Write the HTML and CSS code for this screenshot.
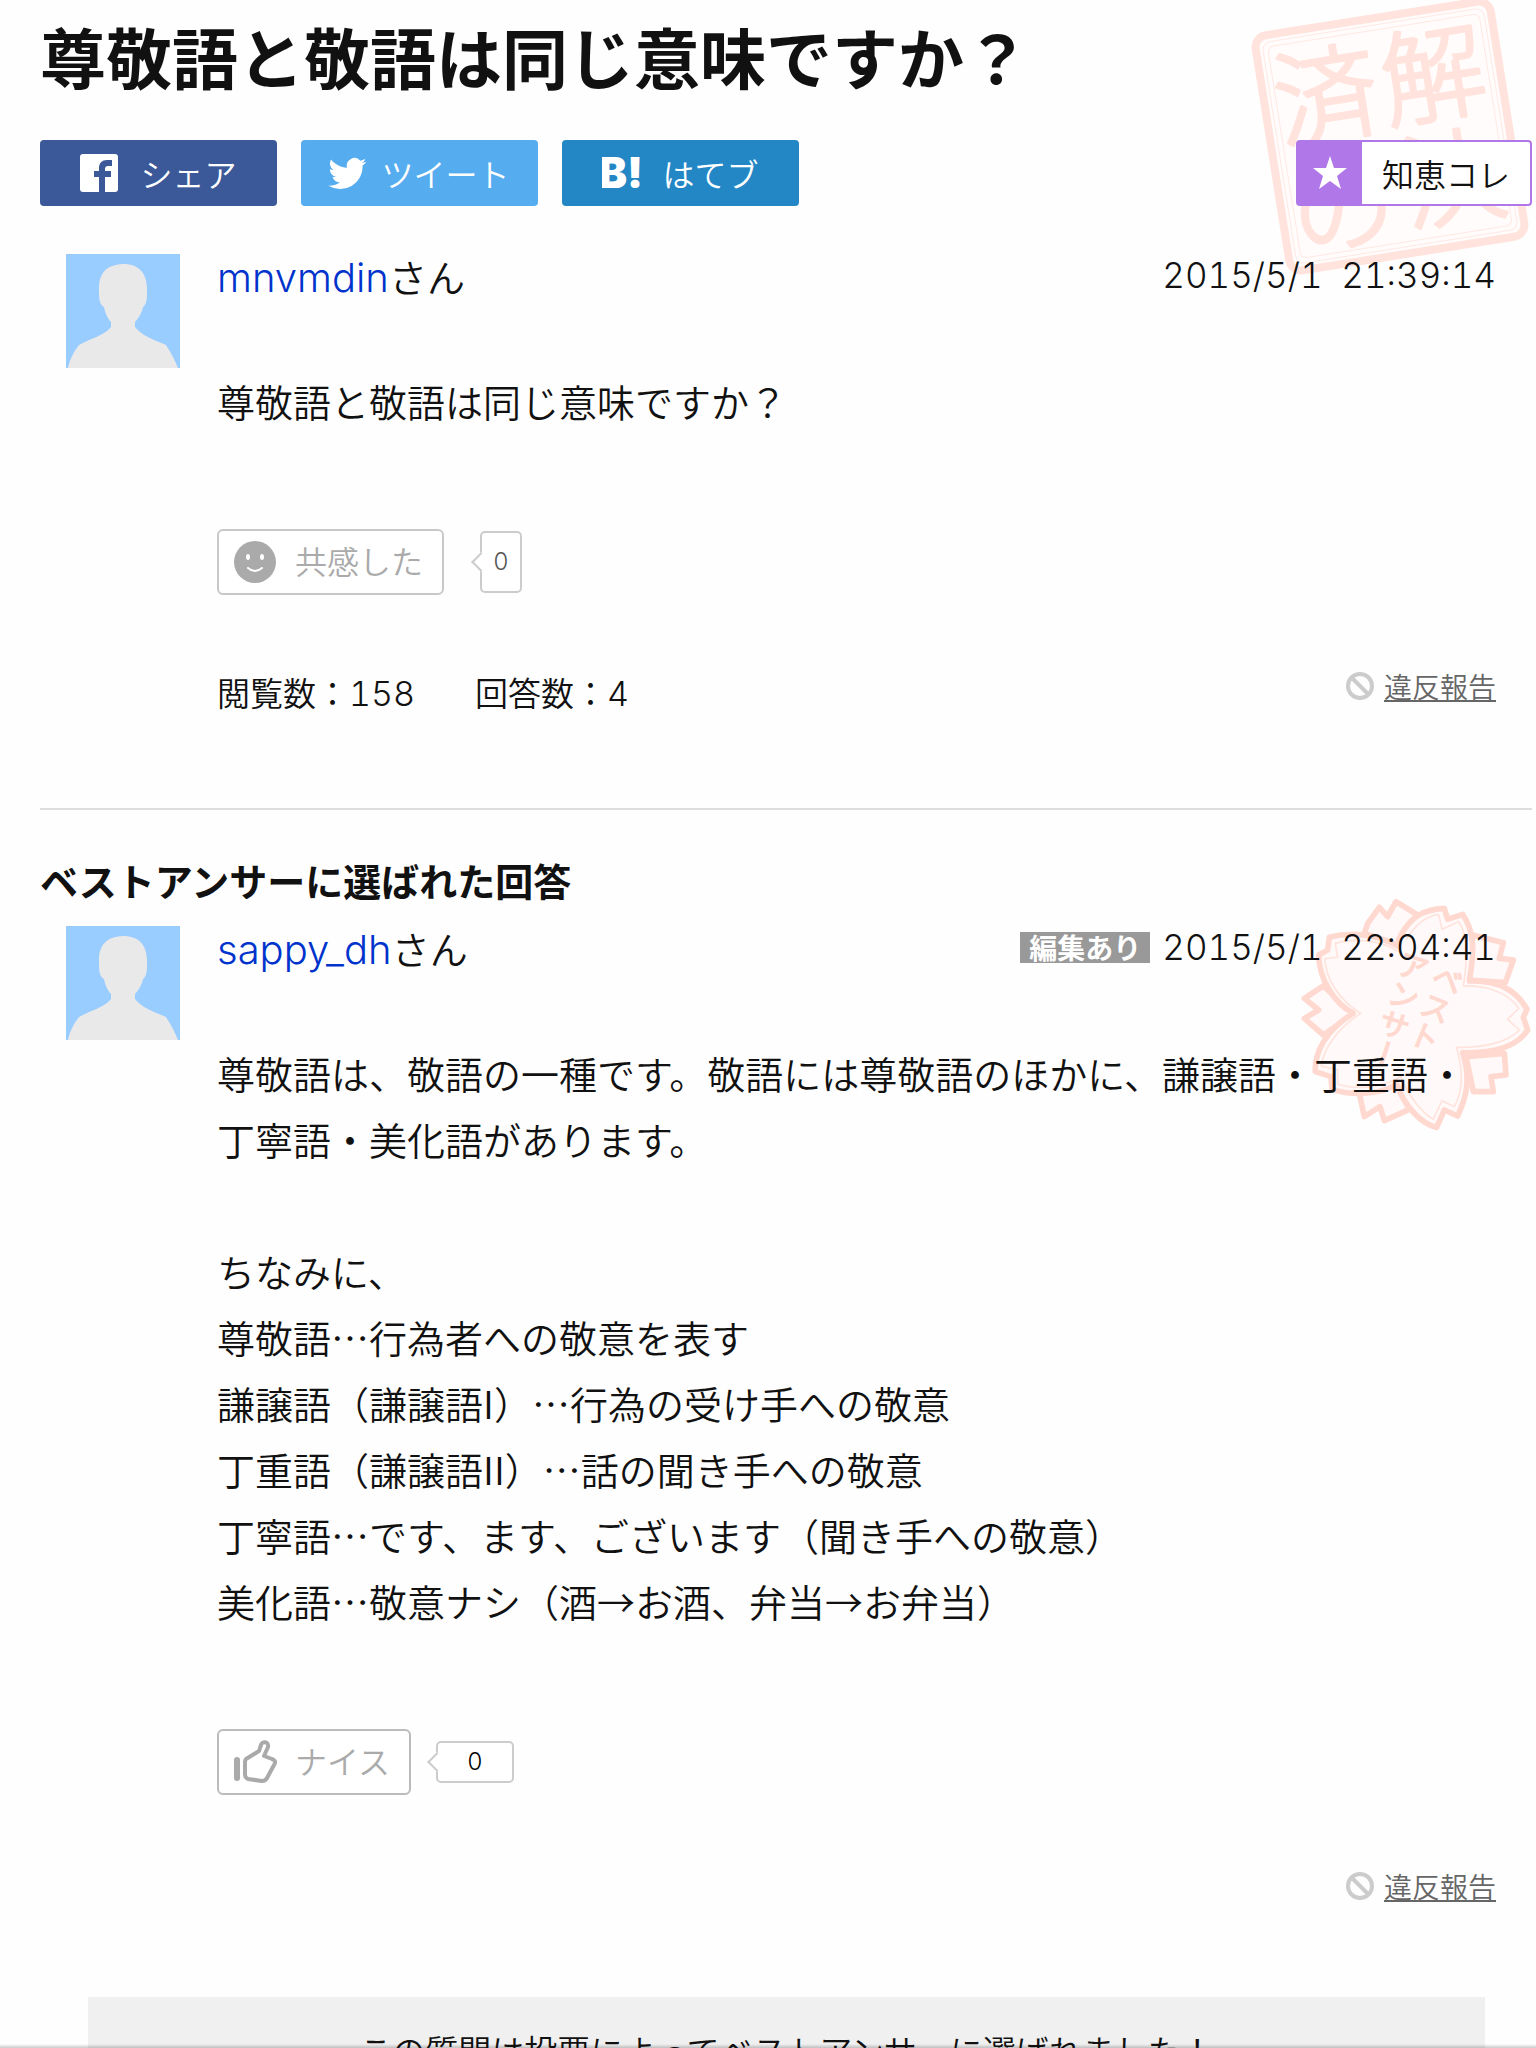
FILE: index.html
```html
<!DOCTYPE html>
<html lang="ja">

<head>
    <meta charset="UTF-8">
    <meta name="viewport" content="width=device-width, initial-scale=1.0">
    <title>尊敬語と敬語は同じ意味ですか？</title>
    <link rel="stylesheet" href="styles.css">
</head>

<body>
    <main class="page">
        <!-- Solved stamp -->
        <svg class="stamp-solved" viewBox="0 0 290 290" aria-hidden="true">
            <g transform="translate(145 145) rotate(-9)">
                <rect class="stamp-frame" x="-119" y="-119" width="238" height="238" rx="12" />
                <rect class="stamp-line" x="-112" y="-112" width="224" height="224" rx="8" />
                <rect class="stamp-line" x="-107" y="-107" width="214" height="214" rx="6" />
                <g class="stamp-text">
                    <text x="52" y="-15">解</text>
                    <text x="56" y="90">決</text>
                    <text x="-57" y="-12">済</text>
                    <text x="-58" y="101">の</text>
                </g>
            </g>
        </svg>

        <h1 class="title">尊敬語と敬語は同じ意味ですか？</h1>

        <div class="toolbar">
            <button class="share facebook" type="button">
                <svg class="share-icon" viewBox="0 0 38 38" aria-hidden="true">
                    <rect width="38" height="38" rx="3" fill="#fff" />
                    <path d="M19 38V23h-5v-6h5v-3c0-5 3-8 8-8h5v6h-4c-2 0-3 1-3 3v2h6v6h-6v15z" fill="#3b5998" />
                </svg>
                <span>シェア</span>
            </button>
            <button class="share twitter" type="button">
                <svg class="share-icon" viewBox="0 0 24 24" aria-hidden="true">
                    <path d="M23.600 4.900c-.9.400-1.800.6-2.800.8 1-.6 1.800-1.600 2.100-2.700-.9.600-2 1-3.100 1.200a4.900 4.900 0 0 0-8.400 4.500C7.300 8.500 3.700 6.500 1.300 3.500a4.900 4.900 0 0 0 1.500 6.600c-.8 0-1.600-.2-2.200-.6v.1c0 2.400 1.700 4.400 3.900 4.800-.7.200-1.500.2-2.200.1.600 2 2.400 3.400 4.600 3.400A9.900 9.900 0 0 1 -.4 19.900 14 14 0 0 0 21.200 7.300c1-.6 1.800-1.500 2.400-2.400z" fill="#fff" />
                </svg>
                <span>ツイート</span>
            </button>
            <button class="share hatena" type="button">
                <svg class="share-icon" viewBox="0 0 38 38" aria-hidden="true">
                    <text class="hatena-mark" x="19" y="34">B!</text>
                </svg>
                <span>はてブ</span>
            </button>
            <button class="collect" type="button">
                <span class="collect-icon">
                    <svg width="36" height="36" viewBox="0 0 36 36" aria-hidden="true">
                        <path d="M18 1l4 12h13L25 21l4 13-11-8-11 8 4-13L1 13h13z" fill="#fff" />
                    </svg>
                </span>
                <span class="collect-label">知恵コレ</span>
            </button>
        </div>

        <article class="post">
            <svg class="avatar" viewBox="0 0 114 114" aria-hidden="true">
                <rect width="114" height="114" fill="#99ccff" />
                <path d="M2 114C4 104 9 96 13 91C26 84 39 81 45 73V68C42 65 39 59 38 53C34 51 33 46 33 39C32 20 39 11 57 10C74 10 82 20 81 39C81 47 80 51 77 53C76 59 72 65 69 68V73C75 81 88 86 100 91C104 97 109 106 112 114Z" fill="#e9e9e9" />
            </svg>
            <div class="post-main">
                <header class="post-header">
                    <p class="author"><a href="#">mnvmdin</a>さん</p>
                    <time class="date" datetime="2015-05-01T21:39:14">2015/5/1&nbsp; 21:39:14</time>
                </header>
                <div class="post-body">
                    <p>尊敬語と敬語は同じ意味ですか？</p>
                </div>
                <div class="reaction">
                    <button class="vote" type="button">
                        <svg width="44" height="44" viewBox="0 0 44 44" aria-hidden="true">
                            <circle cx="22" cy="22" r="21" fill="#aaa" />
                            <ellipse cx="15" cy="17" rx="2" ry="3" fill="#fff" />
                            <ellipse cx="29" cy="17" rx="2" ry="3" fill="#fff" />
                            <path d="M15 28q7 6 14 0" fill="none" stroke="#fff" stroke-width="2" stroke-linecap="round" />
                        </svg>
                        <span>共感した</span>
                    </button>
                    <span class="count count-tall">0</span>
                </div>
                <footer class="post-footer">
                    <ul class="stats">
                        <li>閲覧数：<span class="num">158</span></li>
                        <li>回答数：<span class="num">4</span></li>
                    </ul>
                    <a class="report" href="#">
                        <svg width="28" height="28" viewBox="0 0 28 28" aria-hidden="true">
                            <path d="M14 2a12 12 0 1 0 0 24a12 12 0 0 0 0-24M6 6l16 16" fill="none" stroke="#ccc" stroke-width="4" />
                        </svg>
                        <span>違反報告</span>
                    </a>
                </footer>
            </div>
        </article>

        <section class="best">
            <h2 class="best-title">ベストアンサーに選ばれた回答</h2>
            <article class="post">
                <!-- Best answer stamp -->
                <svg class="stamp-best" viewBox="0 0 900 780" aria-hidden="true">
                    <g class="petals">
                        <path d="M385 160L395 130L430 82L455 110L480 65L545 105L500 200Z" />
                        <path d="M710 165L802 188L790 235L832 240L808 308L700 300Z" />
                        <path d="M805 520L810 585L765 590L772 635L712 635L690 530Z" />
                        <path d="M370 640L385 710L432 680L445 722L520 688L480 610Z" />
                        <path d="M262 318L205 355L248 390L205 415L262 465L355 400Z" />
                        <path d="M488 178C520 112 560 88 625 85L635 118L680 103C712 150 718 200 700 303C770 300 835 320 873 388L862 412L875 450C840 505 760 520 680 518C706 600 690 655 665 708L625 690L602 742C560 735 505 680 482 612C430 648 340 645 288 628L285 590L238 575C235 520 268 450 352 400C295 370 250 300 248 225L275 210L280 172C340 155 420 160 488 200Z" />
                    </g>
                    <path class="petal-line" d="M510 180C540 130 570 108 608 104L618 148L668 125C694 160 698 220 682 318C750 316 815 335 848 385L815 418L850 450C815 488 740 504 662 502C686 590 676 640 655 680L618 662L592 718C560 700 518 650 494 590C430 628 350 628 305 612L305 570L256 558C262 510 298 450 374 400C310 360 270 300 266 236L305 232L298 190C350 174 430 178 486 214" />
                    <g class="stamp-small-text">
                        <text transform="translate(652 256) rotate(22)">ベスト</text>
                        <text transform="translate(546 216) rotate(18)">アンサー</text>
                    </g>
                </svg>
                <svg class="avatar" viewBox="0 0 114 114" aria-hidden="true">
                    <rect width="114" height="114" fill="#99ccff" />
                    <path d="M2 114C4 104 9 96 13 91C26 84 39 81 45 73V68C42 65 39 59 38 53C34 51 33 46 33 39C32 20 39 11 57 10C74 10 82 20 81 39C81 47 80 51 77 53C76 59 72 65 69 68V73C75 81 88 86 100 91C104 97 109 106 112 114Z" fill="#e9e9e9" />
                </svg>
                <div class="post-main">
                    <header class="post-header">
                        <p class="author"><a href="#">sappy_dh</a>さん</p>
                        <div class="post-meta">
                            <span class="edited">編集あり</span>
                            <time class="date" datetime="2015-05-01T22:04:41">2015/5/1&nbsp; 22:04:41</time>
                        </div>
                    </header>
                    <div class="post-body">
                        <p>尊敬語は、敬語の一種です。敬語には尊敬語のほかに、謙譲語・丁重語・丁寧語・美化語があります。<br>
                            <br>
                            ちなみに、<br>
                            尊敬語…行為者への敬意を表す<br>
                            謙譲語（謙譲語I）…行為の受け手への敬意<br>
                            丁重語（謙譲語II）…話の聞き手への敬意<br>
                            丁寧語…です、ます、ございます（聞き手への敬意）<br>
                            美化語…敬意ナシ（酒→お酒、弁当→お弁当）</p>
                    </div>
                    <div class="reaction">
                        <button class="vote vote-nice" type="button">
                            <svg width="44" height="44" viewBox="0 0 44 44" aria-hidden="true">
                                <path d="M4 20V38" fill="none" stroke="#aaa" stroke-width="6" stroke-linecap="round" />
                                <path d="M13 19L26 11L28 5C29 1 36 1 35 7L31 16L39 19C42 20 43 22 41 25L34 38C33 40 31 41 29 41L15 39C13 38 12 37 12 35V22Q12 20 13 19Z" fill="none" stroke="#aaa" stroke-width="4" stroke-linejoin="round" />
                            </svg>
                            <span>ナイス</span>
                        </button>
                        <span class="count count-wide">0</span>
                    </div>
                    <footer class="post-footer">
                        <a class="report" href="#">
                            <svg width="28" height="28" viewBox="0 0 28 28" aria-hidden="true">
                                <path d="M14 2a12 12 0 1 0 0 24a12 12 0 0 0 0-24M6 6l16 16" fill="none" stroke="#ccc" stroke-width="4" />
                            </svg>
                            <span>違反報告</span>
                        </a>
                    </footer>
                </div>
            </article>
        </section>

        <p class="notice">この質問は投票によってベストアンサーに選ばれました！</p>
    </main>
    <div class="bottom-shadow"></div>
</body>

</html>
```
FILE: styles.css
```css
* {
    box-sizing: border-box;
}

body {
    margin: 0;
    height: 100vh;
    overflow: hidden;
    background-color: #fefefe;
    color: #111;
    font-family: 'Noto Sans CJK JP', sans-serif;
    font-size: 38px;
    font-weight: 350;
}

h1,
h2,
p,
ul {
    margin: 0;
    padding: 0;
}

button {
    padding: 0;
    font-family: inherit;
    font-size: 32px;
    font-weight: inherit;
    line-height: 44px;
    cursor: pointer;
}

svg {
    flex-shrink: 0;
}

.page {
    position: relative;
    z-index: 0;
    padding: 0 4px 0 40px;
}

.title {
    font-size: 66px;
    font-weight: bold;
    line-height: 110px;
}

/* Stamps */
.stamp-solved {
    position: absolute;
    z-index: -1;
    top: -9px;
    right: 1px;
    width: 290px;
    height: 290px;
}

.stamp-frame {
    fill: #fffcfb;
    stroke: #ffe3dc;
    stroke-width: 8;
}

.stamp-line {
    fill: none;
    stroke: #ffe9e4;
    stroke-width: 1;
}

.stamp-text {
    fill: #ffe3dc;
    stroke: #ffe3dc;
    stroke-width: 3;
    stroke-linejoin: round;
    font-size: 104px;
    font-weight: 300;
    text-anchor: middle;
}

.stamp-best {
    position: absolute;
    z-index: -1;
    top: -46px;
    right: -4px;
    width: 300px;
    height: 260px;
}

.petals {
    fill: #fffaf9;
    stroke: #ffd9d0;
    stroke-width: 17;
    stroke-linejoin: round;
}

.petal-line {
    fill: none;
    stroke: #ffe3dc;
    stroke-width: 5;
}

.stamp-small-text {
    fill: #ffd9d0;
    stroke: #ffd9d0;
    stroke-width: 4;
    font-size: 92px;
    font-weight: 400;
    writing-mode: vertical-rl;
}

/* Share buttons */
.toolbar {
    display: flex;
    gap: 24px;
    margin: 30px 0 48px;
}

.share {
    display: flex;
    align-items: center;
    justify-content: center;
    gap: 22px;
    width: 237px;
    height: 66px;
    border: none;
    border-radius: 4px;
    color: #fff;
}

.share-icon {
    width: 38px;
    height: 38px;
}

.facebook {
    background-color: #3b5998;
}

.twitter {
    gap: 14px;
    background-color: #55acee;
}

.hatena {
    background-color: #2387c6;
}

.hatena-mark {
    fill: #fff;
    font-family: Inter, sans-serif;
    font-size: 42px;
    font-weight: 900;
    text-anchor: middle;
}

.collect {
    display: flex;
    width: 236px;
    height: 66px;
    margin-left: auto;
    border: 2px solid #b077e8;
    border-radius: 4px;
    background-color: #fff;
    color: #111;
}

.collect-icon {
    display: flex;
    align-items: center;
    justify-content: center;
    width: 64px;
    height: 100%;
    background-color: #b077e8;
}

.collect-label {
    flex: 1;
    line-height: 62px;
    text-align: center;
}

/* Posts */
.post {
    position: relative;
    display: flex;
    align-items: flex-start;
    gap: 37px;
    padding: 0 36px 0 26px;
}

.avatar {
    width: 114px;
    height: 114px;
}

.post-main {
    flex: 1;
}

.post-header {
    display: flex;
    align-items: flex-start;
    justify-content: space-between;
    line-height: 44px;
}

.author a {
    color: #0033cc;
    font-family: Inter, sans-serif;
    font-size: 40px;
    text-decoration: none;
}

.post-meta {
    display: flex;
    align-items: center;
    gap: 12px;
}

.date,
.num {
    font-family: Inter, sans-serif;
    font-size: 34px;
    font-variant-numeric: tabular-nums;
}

.date {
    font-size: 35px;
    line-height: 42px;
}

.edited {
    padding: 0 9px;
    background-color: #999;
    color: #fff;
    font-size: 28px;
    font-weight: bold;
    line-height: 31px;
}

.post-body {
    margin-top: 68px;
    line-height: 66px;
}

.reaction {
    display: flex;
    align-items: center;
    margin: 95px 0 68px;
}

.vote {
    display: flex;
    align-items: center;
    gap: 18px;
    width: 227px;
    height: 66px;
    padding-left: 14px;
    border: 2px solid #c8c8c8;
    border-radius: 6px;
    background-color: #fff;
    color: #aaa;
}

.vote span {
    padding-bottom: 4px;
}

.vote-nice {
    width: 194px;
    border-color: #bbb;
}

.count {
    position: relative;
    border: 2px solid #ccc;
    border-radius: 5px;
    background-color: #fff;
    font-family: Inter, sans-serif;
    font-size: 24px;
    text-align: center;
}

.count::before {
    content: '';
    position: absolute;
    top: 50%;
    left: -8px;
    width: 12px;
    height: 12px;
    border: solid #ccc;
    border-width: 0 0 2px 2px;
    background-color: #fff;
    transform: translateY(-50%) rotate(45deg);
}

.count-tall {
    width: 42px;
    margin-left: 36px;
    color: #555;
    line-height: 58px;
}

.count-wide {
    width: 78px;
    margin-left: 25px;
    color: #000;
    line-height: 38px;
}

.post-footer {
    display: flex;
    align-items: flex-start;
    justify-content: space-between;
}

.stats {
    display: flex;
    gap: 60px;
    font-size: 33px;
    line-height: 58px;
    list-style: none;
}

.report {
    display: flex;
    align-items: center;
    gap: 10px;
    margin-left: auto;
    color: #666;
    font-size: 28px;
    line-height: 46px;
    text-decoration: none;
}

.report span {
    text-decoration: underline;
}

.best {
    margin-top: 85px;
    border-top: 2px solid #ddd;
}

.best-title {
    margin: 42px 0 18px;
    font-size: 38px;
    font-weight: bold;
    line-height: 56px;
}

.notice {
    margin: 88px 47px 0 48px;
    padding: 28px 0;
    background-color: #f0f0f0;
    font-size: 33px;
    line-height: 50px;
    text-align: center;
}

.bottom-shadow {
    position: fixed;
    bottom: 0;
    left: 0;
    width: 100%;
    height: 4px;
    background: linear-gradient(rgba(0, 0, 0, 0), rgba(0, 0, 0, 0.2));
}
```
